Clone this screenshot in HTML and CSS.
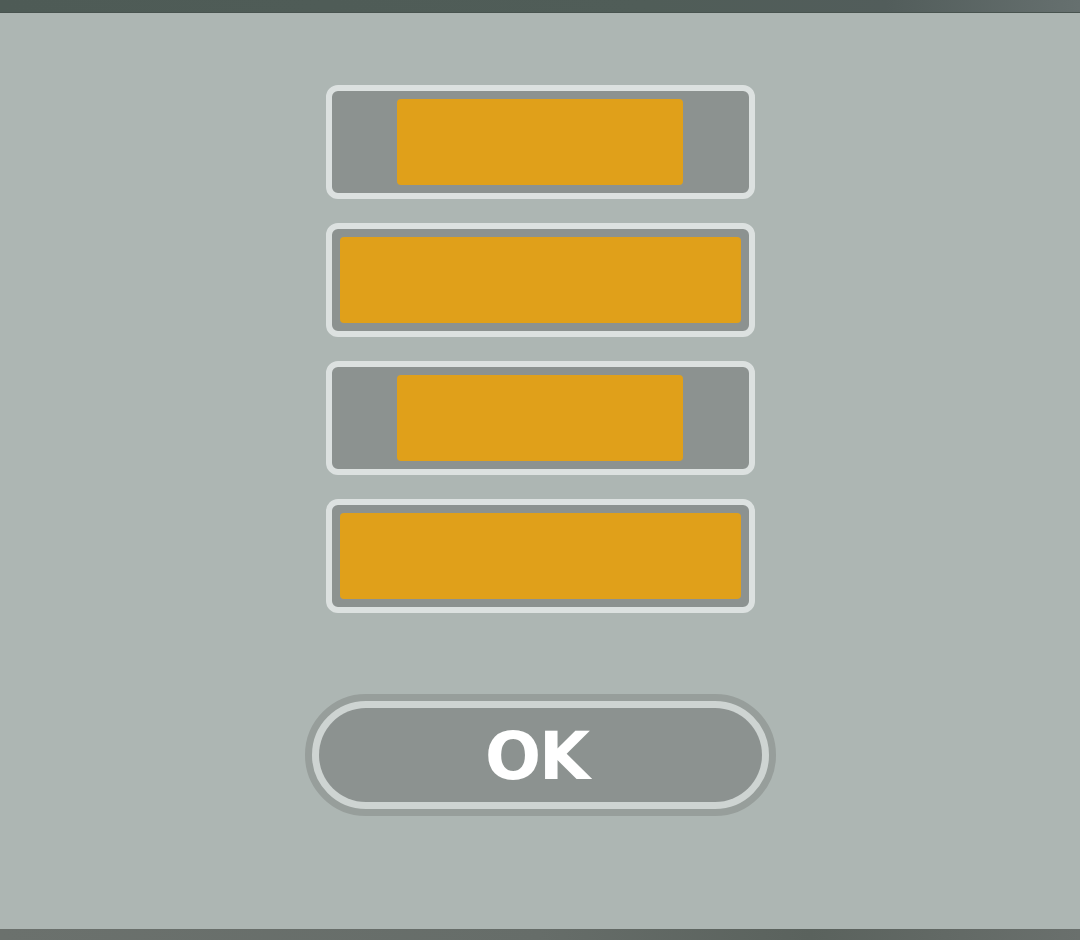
FILE: index.html
```html
<!DOCTYPE html>
<html>
<head>
<meta charset="utf-8">
<link rel="stylesheet" href="styles.css">
</head>
<body>
<div class="screen">
  <div class="topbar"></div>
  <main class="panel">
    <div class="slots">
      <div class="slot"><div class="fill narrow"></div></div>
      <div class="slot"><div class="fill wide"></div></div>
      <div class="slot"><div class="fill narrow"></div></div>
      <div class="slot"><div class="fill wide"></div></div>
    </div>
    <button class="ok"><span class="ok-inner">OK</span></button>
  </main>
  <div class="bottombar"></div>
</div>
</body>
</html>
```
FILE: styles.css
```css
* { box-sizing: border-box; }
html, body { margin: 0; padding: 0; }
body { width: 1080px; height: 940px; overflow: hidden; background: #adb6b3; }
.screen { display: flex; flex-direction: column; height: 940px; }
.topbar {
  height: 13px;
  background: linear-gradient(90deg, #4e5b56 0%, #505d58 60%, #525d5b 82%, #66706f 100%);
  border-bottom: 1px solid #48534f;
}
.panel {
  flex: 1;
  display: flex;
  flex-direction: column;
  align-items: center;
  padding-top: 72px;
  background: #adb6b3;
}
.slots { display: flex; flex-direction: column; gap: 24px; }
.slot {
  width: 429px;
  height: 114px;
  border: 6px solid #dce1e0;
  border-radius: 12px;
  background: #8c9290;
  display: flex;
  align-items: center;
  justify-content: center;
}
.fill {
  height: 86px;
  background: #e0a01a;
  border-radius: 4px;
}
.fill.narrow { width: 286px; }
.fill.wide { width: 401px; }
.ok {
  margin-top: 81px;
  width: 471px;
  height: 122px;
  padding: 0;
  border: 7px solid #979e9b;
  border-radius: 61px;
  background: #ced4d2;
  display: flex;
  align-items: stretch;
  justify-content: stretch;
  cursor: pointer;
}
.ok-inner {
  flex: 1;
  margin: 7px;
  border-radius: 47px;
  background: #8c9290;
  color: #ffffff;
  font-family: "DejaVu Sans", "Liberation Sans", sans-serif;
  font-weight: bold;
  font-size: 66px;
  letter-spacing: -2px;
  display: flex;
  align-items: center;
  justify-content: center;
  padding-right: 7px;
  padding-top: 2px;
}
.bottombar {
  height: 11px;
  background: linear-gradient(90deg, #6b716d 0%, #666d69 50%, #5a625d 75%, #6a706d 100%);
}
```
